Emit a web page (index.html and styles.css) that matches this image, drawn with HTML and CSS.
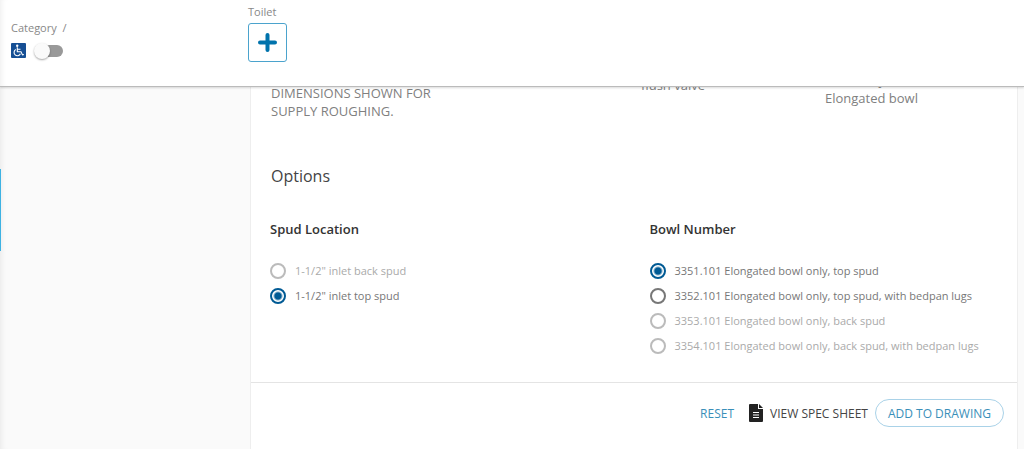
FILE: index.html
```html
<!DOCTYPE html>
<html lang="en">
<head>
  <meta charset="UTF-8">
  <meta name="viewport" content="width=device-width, initial-scale=1.0">
  <title>Toilet Options</title>
  <link rel="stylesheet" href="styles.css">
</head>
<body>
  <!-- Top Bar -->
  <header class="topbar">
    <div class="category">
      <div class="category-title">Category <span class="slash">/</span></div>
      <label class="ada">
        <svg class="ada-icon" viewBox="0 0 15 15" role="img" aria-label="Accessible">
          <rect width="15" height="15" rx="1" fill="#164f94"/>
          <circle cx="6.2" cy="2.8" r="1.2" fill="#fff"/>
          <path d="M6.3 4.2V8.7H10l1.5 3.2 1.4-.5M6.5 6.2h3M4.8 6.6a3.3 3.3 0 1 0 4.6 4.2" fill="none" stroke="#fff" stroke-width="1.1"/>
        </svg>
        <input type="checkbox" class="switch" aria-label="Accessible only">
      </label>
    </div>
    <div class="product">
      <span class="product-name">Toilet</span>
      <button class="add-product" aria-label="Add toilet">
        <svg width="19" height="19" viewBox="0 0 19 19">
          <path d="M9.5 2v15M2 9.5h15" stroke="#0073ac" stroke-width="4" stroke-linecap="round"/>
        </svg>
      </button>
    </div>
  </header>

  <!-- Scrolled Content -->
  <main class="content">
    <div class="side-handle"></div>
    <section class="card">
      <div class="details">
        <p class="note">DIMENSIONS SHOWN FOR SUPPLY ROUGHING.</p>
        <p class="valve">flush valve</p>
        <p class="bowl">Floor only<br>Elongated bowl</p>
      </div>

      <h2>Options</h2>

      <form class="options" id="options">
        <fieldset>
          <legend>Spud Location</legend>
          <label class="disabled"><input type="radio" name="spud" disabled>1-1/2" inlet back spud</label>
          <label><input type="radio" name="spud" checked>1-1/2" inlet top spud</label>
        </fieldset>
        <fieldset>
          <legend>Bowl Number</legend>
          <label><input type="radio" name="bowl" checked>3351.101 Elongated bowl only, top spud</label>
          <label><input type="radio" name="bowl">3352.101 Elongated bowl only, top spud, with bedpan lugs</label>
          <label class="disabled"><input type="radio" name="bowl" disabled>3353.101 Elongated bowl only, back spud</label>
          <label class="disabled"><input type="radio" name="bowl" disabled>3354.101 Elongated bowl only, back spud, with bedpan lugs</label>
        </fieldset>
      </form>

      <!-- Card Actions -->
      <div class="actions">
        <button type="reset" form="options" class="reset">RESET</button>
        <a href="#" class="spec">
          <svg width="14" height="18" viewBox="0 0 14 18">
            <path d="M1 0h8v5h5v12q0 1-1 1H1q-1 0-1-1V1q0-1 1-1z" fill="#222"/>
            <path d="M10 0l4 4h-4z" fill="#222"/>
            <path d="M4 8.500h6M4 11h6M4 13.500h6" stroke="#fff" stroke-width="1.200"/>
          </svg>
          VIEW SPEC SHEET
        </a>
        <button class="add">ADD TO DRAWING</button>
      </div>
    </section>
    <div class="next-card"></div>
  </main>
</body>
</html>
```
FILE: styles.css
```css
/* General Reset */
* {
  margin: 0;
  padding: 0;
  box-sizing: border-box;
}

body {
  display: flex;
  flex-direction: column;
  height: 100vh;
  overflow: hidden;
  background: #fafafa;
  color: #777;
  font-family: 'Open Sans', sans-serif;
  font-size: 11px;
  line-height: 15px;
}

button,
input {
  font: inherit;
}

/* Top Bar */
.topbar {
  position: relative;
  z-index: 1;
  display: grid;
  grid-template-columns: 237px 1fr;
  padding: 4px 11px 24px;
  background: #fff;
  border-bottom: 1px solid #bbb;
  box-shadow: 0 1px 2px rgba(0, 0, 0, 0.15), inset 6px 0 6px -5px rgba(0, 0, 0, 0.08);
}

.category {
  padding-top: 16px;
  color: #888;
}

.slash {
  margin-left: 3px;
}

.ada {
  display: flex;
  align-items: center;
  gap: 8px;
  margin-top: 8px;
}

.ada-icon {
  width: 15px;
  height: 15px;
}

/* Toggle Switch */
.switch {
  appearance: none;
  display: flex;
  align-items: center;
  width: 29px;
  height: 12px;
  border-radius: 6px;
  background: linear-gradient(to right, transparent 8px, #999 8px);
}

.switch::before {
  content: '';
  width: 16px;
  height: 16px;
  flex: none;
  border-radius: 50%;
  background: #fafafa;
  box-shadow: 0 1px 2px rgba(0, 0, 0, 0.35);
}

.switch:checked {
  justify-content: flex-end;
}

.product {
  display: flex;
  flex-direction: column;
  align-items: flex-start;
  gap: 4px;
  color: #888;
}

.add-product {
  display: flex;
  align-items: center;
  justify-content: center;
  width: 39px;
  height: 39px;
  background: #fff;
  border: 1px solid #4ba3cd;
  border-radius: 3px;
}

/* Content */
.content {
  position: relative;
  flex: 1;
  min-height: 0;
  display: flex;
  flex-direction: column;
  justify-content: flex-end;
  overflow: hidden;
  padding: 0 6px 0 250px;
  box-shadow: inset 6px 0 6px -5px rgba(0, 0, 0, 0.08);
}

.side-handle {
  position: absolute;
  left: 0;
  top: 82px;
  width: 1px;
  height: 82px;
  background: #3db2e3;
}

.card,
.next-card {
  flex: none;
  background: #fff;
  border: 1px solid #eee;
}

.card {
  border-bottom: 0;
}

.next-card {
  height: 6px;
  border-top: 0;
  border-bottom: 0;
}

.details {
  display: grid;
  grid-template-columns: 370px 184px 1fr;
  align-items: end;
  padding: 0 20px;
  color: #808080;
  font-size: 13px;
  line-height: 18px;
}

.note {
  max-width: 180px;
}

.valve {
  padding-bottom: 26px;
}

.bowl {
  padding-bottom: 13px;
}

h2 {
  margin: 44px 20px 0;
  color: #444;
  font-size: 16px;
  font-weight: 400;
  line-height: 24px;
}

/* Option Groups */
.options {
  display: grid;
  grid-template-columns: 1fr 1fr;
  gap: 12px;
  padding: 31px 0 24px 19px;
}

fieldset {
  border: 0;
  min-width: 0;
}

legend {
  margin-bottom: 19px;
  color: #333;
  font-size: 13px;
  font-weight: 600;
  line-height: 20px;
}

.options label {
  display: flex;
  align-items: center;
  gap: 9px;
  height: 25px;
}

.options .disabled {
  color: #aaa;
}

input[type="radio"] {
  appearance: none;
  flex: none;
  width: 16px;
  height: 16px;
  border: 2px solid #777;
  border-radius: 50%;
}

input[type="radio"]:checked {
  border-color: #005a94;
  background: radial-gradient(circle, #005a94 3px, #fff 5px);
}

input[type="radio"]:disabled {
  border-color: #bbb;
}

/* Card Actions */
.actions {
  display: flex;
  align-items: center;
  justify-content: flex-end;
  gap: 7px;
  padding: 16px 13px;
  border-top: 1px solid #e4e4e4;
  font-size: 12px;
}

.actions button {
  background: #fff;
  border: 0;
  color: #3a8fb9;
}

.actions .reset {
  padding: 0 8px;
}

.spec {
  display: flex;
  align-items: center;
  gap: 7px;
  color: #444;
  text-decoration: none;
}

.actions .add {
  height: 28px;
  padding: 0 12px;
  border: 1px solid #a9d2e8;
  border-radius: 14px;
}
```
